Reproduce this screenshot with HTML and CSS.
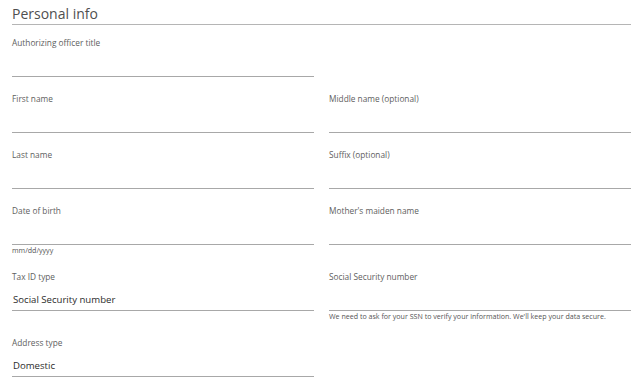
FILE: index.html
```html
<!DOCTYPE html>
<html lang="en">
<head>
<meta charset="utf-8">
<title>Personal info</title>
<link rel="stylesheet" href="styles.css">
</head>
<body>
<section class="section">
  <h2 class="section-title">Personal info</h2>
  <div class="form-grid">
    <div class="field">
      <div class="label">Authorizing officer title</div>
      <div class="input"></div>
    </div>
    <div class="spacer"></div>

    <div class="field">
      <div class="label">First name</div>
      <div class="input"></div>
    </div>
    <div class="field">
      <div class="label">Middle name (optional)</div>
      <div class="input"></div>
    </div>

    <div class="field">
      <div class="label">Last name</div>
      <div class="input"></div>
    </div>
    <div class="field">
      <div class="label">Suffix (optional)</div>
      <div class="input"></div>
    </div>

    <div class="field">
      <div class="label">Date of birth</div>
      <div class="input"></div>
      <div class="hint">mm/dd/yyyy</div>
    </div>
    <div class="field">
      <div class="label">Mother's maiden name</div>
      <div class="input"></div>
    </div>

    <div class="field">
      <div class="label">Tax ID type</div>
      <div class="input"><span class="value">Social Security number</span></div>
    </div>
    <div class="field">
      <div class="label">Social Security number</div>
      <div class="input"></div>
      <div class="hint">We need to ask for your SSN to verify your information. We'll keep your data secure.</div>
    </div>

    <div class="field">
      <div class="label">Address type</div>
      <div class="input"><span class="value">Domestic</span></div>
    </div>
    <div class="spacer"></div>
  </div>
</section>
</body>
</html>
```
FILE: styles.css
```css
html, body {
  margin: 0;
  padding: 0;
  background: #ffffff;
}

body {
  font-family: "Open Sans", "Noto Sans", sans-serif;
  color: #555555;
}

.section {
  padding: 0 11px 0 12px;
}

.section-title {
  margin: 0;
  padding: 4px 0 0 0;
  font-size: 14px;
  line-height: 20px;
  font-weight: 400;
  color: #4f4f4f;
  border-bottom: 1px solid #b5b5b5;
}

.form-grid {
  display: grid;
  grid-template-columns: 1fr 1fr;
  column-gap: 15px;
  row-gap: 16px;
  margin-top: 12px;
}

.field {
  display: flex;
  flex-direction: column;
}

.label {
  font-size: 8.3px;
  line-height: 12px;
  color: #5e5e5e;
}

.input {
  height: 28px;
  box-sizing: border-box;
  border-bottom: 1px solid #a8a8a8;
  display: flex;
  align-items: flex-end;
  padding: 0 0 3px 1px;
}

.value {
  font-size: 9.6px;
  line-height: 14px;
  color: #2b2b2b;
}

.hint {
  font-size: 7.1px;
  line-height: 10px;
  color: #555555;
}
```
